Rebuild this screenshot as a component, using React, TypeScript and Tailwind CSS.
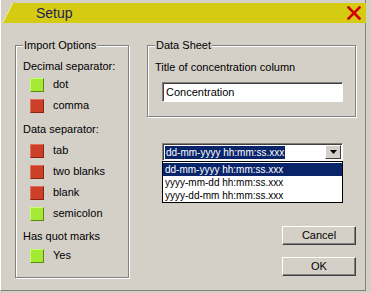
import React from "react";

const font = { fontFamily: '"Liberation Sans", Arial, sans-serif' };

const Led = ({ on }: { on: boolean }) => (
  <span
    className={
      on
        ? "w-[14px] h-[14px] border border-t-[#c8ff70] border-l-[#c8ff70] border-b-[#5c8a12] border-r-[#5c8a12] bg-[#a4ea34]"
        : "w-[14px] h-[14px] border border-t-[#e0705c] border-l-[#e0705c] border-b-[#8a2412] border-r-[#8a2412] bg-[#cc3f28]"
    }
  />
);

const Option = ({ label, on }: { label: string; on: boolean }) => (
  <div className="flex items-center h-[21px] pl-[14px] gap-[9px]">
    <Led on={on} />
    <span>{label}</span>
  </div>
);

const Group = ({
  title,
  className,
  children,
}: {
  title: string;
  className: string;
  children: React.ReactNode;
}) => (
  <div
    className={
      "relative border border-[#808080] shadow-[inset_1px_1px_0_#fff,1px_1px_0_#fff] " +
      className
    }
  >
    <span className="absolute left-[7px] -top-[7px] px-[1px] leading-[13px] bg-[#d4d0c8]">
      {title}
    </span>
    {children}
  </div>
);

const Button = ({ title }: { title: string }) => (
  <div className="w-[74px] h-[19px] flex items-center justify-center bg-[#d4d0c8] border border-t-white border-l-white border-b-[#404040] border-r-[#404040] shadow-[inset_-1px_-1px_0_#808080]">
    {title}
  </div>
);

const formats = [
  "dd-mm-yyyy hh:mm:ss.xxx",
  "yyyy-mm-dd hh:mm:ss.xxx",
  "yyyy-dd-mm hh:mm:ss.xxx",
];

export default function App() {
  return (
    <div
      style={font}
      className="w-[371px] h-[293px] bg-[#d4d0c8] text-[11px] text-black overflow-hidden"
    >
      <div className="w-[366px] h-[291px] border-r border-b border-r-[#808080] border-b-[#808080] border-l border-l-white">
        <div className="pt-[3px] pl-[1px]">
          <div className="relative h-[20px] w-[364px] bg-[#d4cb12] [clip-path:polygon(10px_0,100%_0,100%_100%,0_100%)] flex items-center justify-between pl-[34px] pr-[5px]">
            {/* light edge along the slanted left side */}
            <svg className="absolute left-0 top-0" width="11" height="20" viewBox="0 0 11 20">
              <path d="M0.5 20 L10.5 0" stroke="#f4f0c0" strokeWidth="1.2" />
            </svg>
            <span className="text-[14px] text-[#1c1c5c] leading-none">Setup</span>
            <svg width="14" height="14" viewBox="0 0 14 14">
              <path
                d="M1.5 1.5 L12.5 12.5 M12.5 1.5 L1.5 12.5"
                stroke="#d40000"
                strokeWidth="2.6"
                strokeLinecap="square"
              />
            </svg>
          </div>
        </div>

        <div className="flex pl-[14px] pt-[22px] gap-[18px]">
          <Group title="Import Options" className="w-[114px] h-[233px] flex flex-col">
            <div className="pl-[7px] mt-[14px] leading-[13px]">Decimal separator:</div>
            <div className="mt-[1px]">
              <Option label="dot" on />
              <Option label="comma" on={false} />
            </div>
            <div className="pl-[7px] mt-[7px] leading-[13px]">Data separator:</div>
            <div className="mt-[4px]">
              <Option label="tab" on={false} />
              <Option label="two blanks" on={false} />
              <Option label="blank" on={false} />
              <Option label="semicolon" on />
            </div>
            <div className="pl-[7px] mt-[6px] leading-[13px]">Has quot marks</div>
            <div className="mt-[2px]">
              <Option label="Yes" on />
            </div>
          </Group>

          <div className="flex flex-col w-[209px]">
            <Group title="Data Sheet" className="h-[72px] pl-[7px]">
              <div className="mt-[15px] leading-[13px]">Title of concentration column</div>
              <div className="mt-[8px] ml-[7px] w-[181px] h-[20px] bg-white border border-t-[#808080] border-l-[#808080] border-b-white border-r-white shadow-[inset_1px_1px_0_#404040] flex items-center pl-[3px]">
                Concentration
              </div>
            </Group>

            <div className="ml-[15px] mt-[26px] w-[181px]">
              <div className="h-[18px] bg-white border border-t-[#808080] border-l-[#808080] border-b-white border-r-white shadow-[inset_1px_1px_0_#404040] flex items-center justify-between pl-[2px] pr-[1px]">
                <span className="bg-[#0a246a] text-white text-[10px] leading-[13px] px-[1px]">
                  {formats[0]}
                </span>
                <div className="w-[16px] h-[14px] bg-[#d4d0c8] border border-t-white border-l-white border-b-[#404040] border-r-[#404040] flex items-center justify-center">
                  <svg width="7" height="4" viewBox="0 0 7 4">
                    <path d="M0 0 H7 L3.5 4 Z" fill="#000" />
                  </svg>
                </div>
              </div>
              <div className="h-[42px] bg-white border border-black pt-[1px]">
                {formats.map((f, i) => (
                  <div
                    key={f}
                    className={
                      i === 0
                        ? "h-[13px] leading-[13px] text-[10px] pl-[2px] bg-[#0a246a] text-white"
                        : "h-[13px] leading-[13px] text-[10px] pl-[2px]"
                    }
                  >
                    {f}
                  </div>
                ))}
              </div>
            </div>

            <div className="flex flex-col items-end gap-[12px] mt-[23px]">
              <Button title="Cancel" />
              <Button title="OK" />
            </div>
          </div>
        </div>
      </div>
    </div>
  );
}
